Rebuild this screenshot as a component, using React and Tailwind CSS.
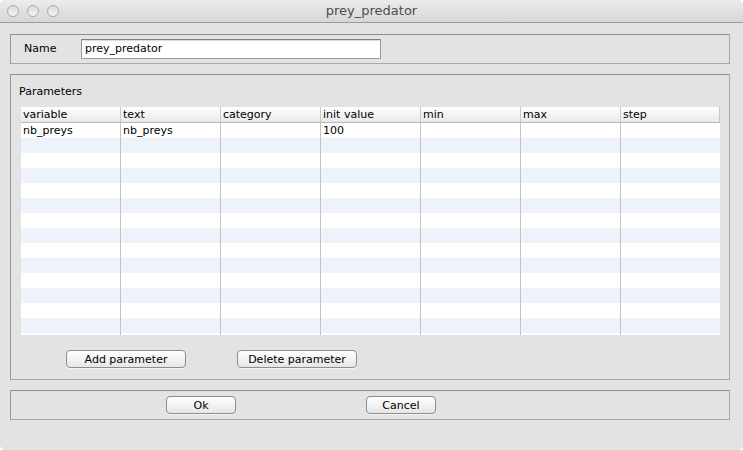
import React from 'react';

const columns = ['variable', 'text', 'category', 'init value', 'min', 'max', 'step'];

const rows = [
  ['nb_preys', 'nb_preys', '', '100', '', '', ''],
  ...Array.from({ length: 14 }, () => ['', '', '', '', '', '', '']),
];

const MacButton = ({ children, className = '' }) => (
  <button
    className={`h-[18px] rounded-[4px] border border-[#8e8e8e] bg-gradient-to-b from-white to-[#e6e6e6] text-[11px] leading-none text-black shadow-[0_1px_0_rgba(255,255,255,0.6)] ${className}`}
  >
    {children}
  </button>
);

const Panel = ({ children, className = '' }) => (
  <div className={`border border-[#a9a9a9] border-t-[#8f8f8f] border-l-[#9a9a9a] bg-[#e3e3e3] ${className}`}>
    {children}
  </div>
);

export default function App() {
  return (
    <div className="w-[743px] h-[450px] bg-white overflow-hidden" style={{ fontFamily: '"DejaVu Sans", "Liberation Sans", sans-serif' }}>
      <div className="w-full h-full rounded-[5px] bg-[#e3e3e3] overflow-hidden flex flex-col">
        {/* Title bar */}
        <div className="relative h-[23px] shrink-0 bg-gradient-to-b from-[#ececec] to-[#d6d6d6] border-b border-[#9c9c9c] flex items-center justify-center">
          <div className="absolute left-[7px] top-[5px] flex gap-[8px]">
            {[0, 1, 2].map((i) => (
              <div
                key={i}
                className="w-[12px] h-[12px] rounded-full border border-[#a8a8a8] bg-gradient-to-b from-[#dcdcdc] to-[#f4f4f4]"
              />
            ))}
          </div>
          <span className="text-[13px] text-[#4d4d4d]">prey_predator</span>
        </div>

        <div className="flex flex-col gap-[10px] pl-[10px] pr-[13px] pt-[11px]">
          {/* Name panel */}
          <Panel className="h-[30px] flex items-center">
            <span className="ml-[13px] w-[57px] text-[11px] text-black">Name</span>
            <div className="w-[300px] h-[20px] bg-white border border-[#9b9b9b] border-t-[#7d7d7d] shadow-[inset_0_1px_1px_rgba(0,0,0,0.15)] flex items-center pl-[3px]">
              <span className="text-[11px] text-black">prey_predator</span>
            </div>
          </Panel>

          {/* Parameters panel */}
          <Panel className="h-[306px] flex flex-col">
            <div className="pl-[8px] pt-[9px] h-[32px] text-[11px] text-black">Parameters</div>
            <div className="ml-[10px] w-[699px] h-[228px] bg-white overflow-hidden">
              <div className="flex h-[16px] bg-gradient-to-b from-white to-[#e9e9e9] border-b border-[#b9b9b9]">
                {columns.map((c, i) => (
                  <div
                    key={c}
                    className={`h-full text-[11px] leading-[15px] text-black pl-[2px] border-r border-[#cacaca] ${i === 6 ? 'w-[99px]' : 'w-[100px]'}`}
                  >
                    {c}
                  </div>
                ))}
              </div>
              {rows.map((r, ri) => (
                <div key={ri} className={`flex h-[15px] ${ri % 2 === 1 ? 'bg-[#eef2fb]' : 'bg-white'}`}>
                  {r.map((cell, ci) => (
                    <div
                      key={ci}
                      className={`h-full text-[11px] leading-[15px] text-black pl-[2px] ${ci === 6 ? 'w-[99px]' : 'w-[100px] border-r border-[#c3c3c3]'}`}
                    >
                      {cell}
                    </div>
                  ))}
                </div>
              ))}
            </div>
            <div className="flex gap-[51px] pl-[55px] pt-[15px]">
              <MacButton className="w-[120px]">Add parameter</MacButton>
              <MacButton className="w-[120px]">Delete parameter</MacButton>
            </div>
          </Panel>

          {/* Bottom panel */}
          <Panel className="h-[30px] flex items-center">
            <div className="flex gap-[130px] pl-[155px]">
              <MacButton className="w-[70px]">Ok</MacButton>
              <MacButton className="w-[70px]">Cancel</MacButton>
            </div>
          </Panel>
        </div>
      </div>
    </div>
  );
}
